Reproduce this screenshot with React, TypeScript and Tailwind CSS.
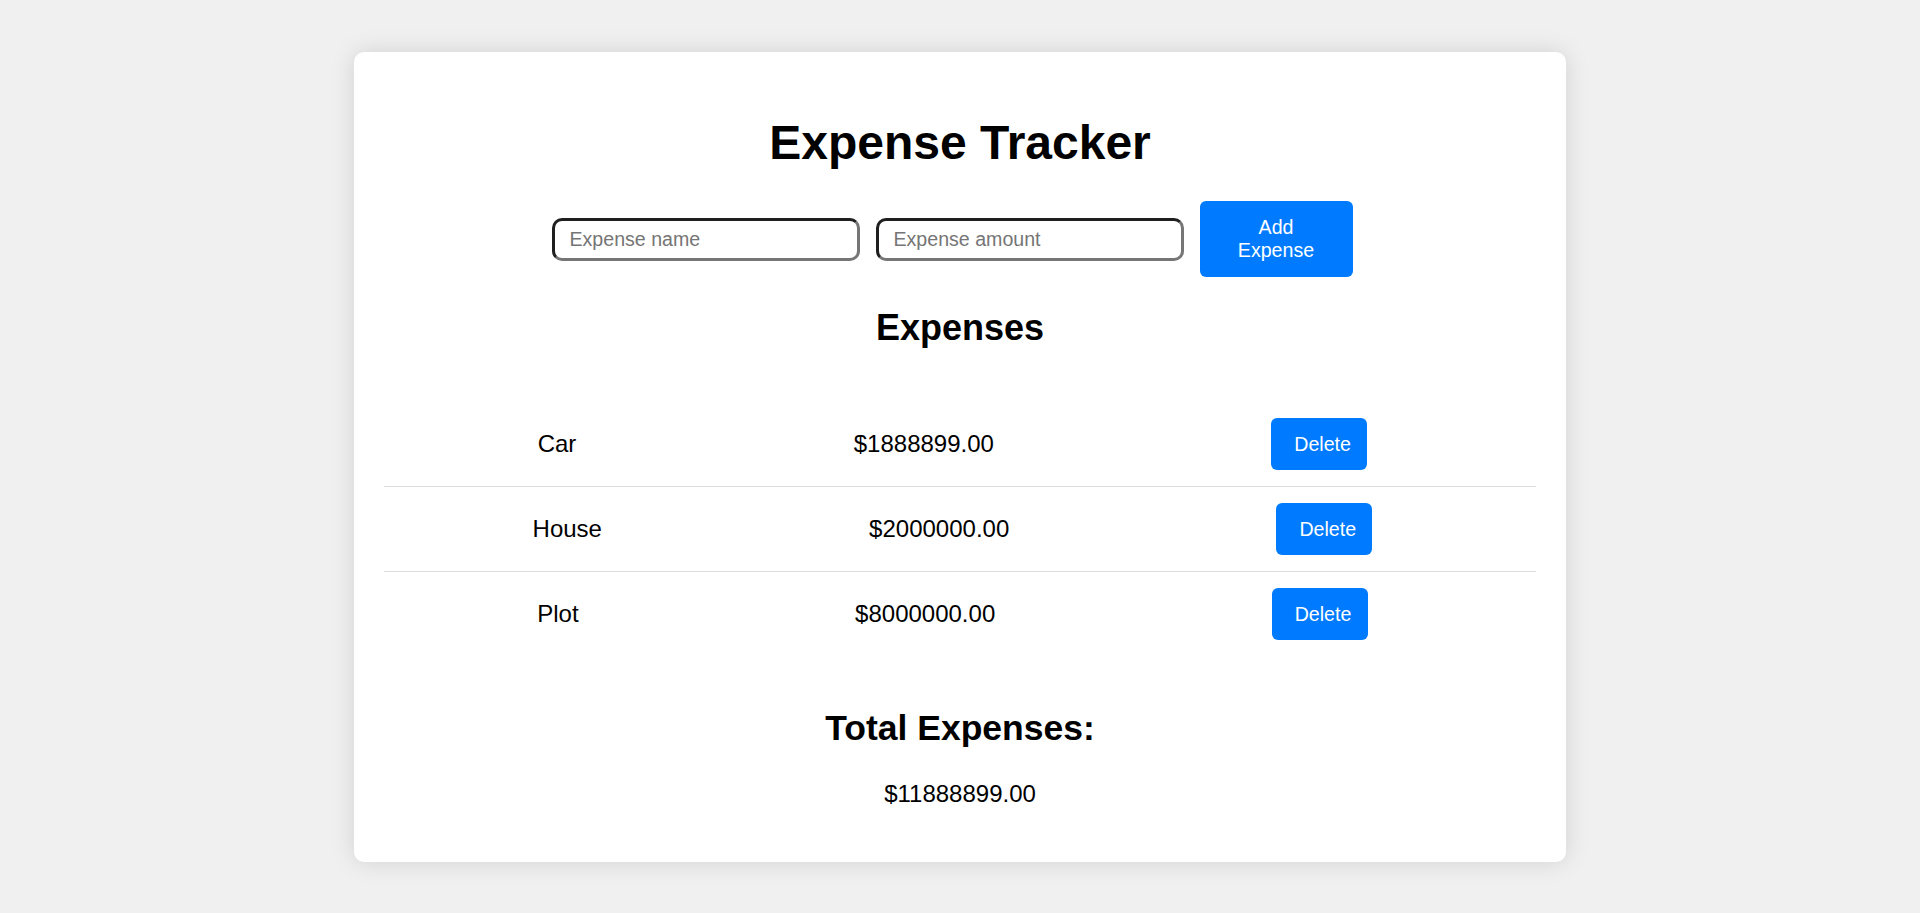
import { useState } from "react";

type Expense = { id: number; name: string; amount: number };

const initial: Expense[] = [
  { id: 1, name: "Car", amount: 1888899 },
  { id: 2, name: "House", amount: 2000000 },
  { id: 3, name: "Plot", amount: 8000000 },
];

export default function App() {
  const [expenses, setExpenses] = useState<Expense[]>(initial);
  const [name, setName] = useState("");
  const [amount, setAmount] = useState("");

  const addExpense = () => {
    const value = parseFloat(amount);
    if (!name.trim() || isNaN(value)) return;
    setExpenses([...expenses, { id: Date.now(), name: name.trim(), amount: value }]);
    setName("");
    setAmount("");
  };

  const total = expenses.reduce((sum, e) => sum + e.amount, 0);

  return (
    <div className="min-h-screen bg-[#f0f0f0] pt-[52px] pb-[50px] font-['Liberation_Sans',Arial,sans-serif] text-black">
      <div className="mx-auto w-[1212px] rounded-[10px] bg-white px-[30px] pt-[63px] pb-[54px] shadow-[0_0_24px_rgba(0,0,0,0.13)]">
        <h1 className="text-center text-[48px] leading-[56px] font-bold">Expense Tracker</h1>

        <div className="mt-[30px] flex items-center justify-center">
          <input
            value={name}
            onChange={(e) => setName(e.target.value)}
            placeholder="Expense name"
            className="mr-4 h-[43px] w-[308px] rounded-[10px] border-[3px] border-t-[#1f1f1f] border-l-[#1f1f1f] border-b-[#767676] border-r-[#767676] pl-[15px] text-[19.6px] outline-none placeholder:text-[#757575]"
          />
          <input
            value={amount}
            onChange={(e) => setAmount(e.target.value)}
            placeholder="Expense amount"
            type="number"
            className="mr-4 h-[43px] w-[308px] rounded-[10px] border-[3px] border-t-[#1f1f1f] border-l-[#1f1f1f] border-b-[#767676] border-r-[#767676] pl-[15px] text-[19.6px] outline-none placeholder:text-[#757575] [appearance:textfield]"
          />
          <button
            onClick={addExpense}
            className="mr-4 w-[153px] rounded-[6px] bg-[#007bff] px-[24px] py-[15px] text-[19.6px] leading-[23px] text-white"
          >
            Add Expense
          </button>
        </div>

        <h2 className="mt-[30px] text-center text-[36px] leading-[42px] font-bold">Expenses</h2>

        <ul className="mt-[53px]">
          {expenses.map((e) => (
            <li
              key={e.id}
              className="flex items-center justify-around border-b border-[#dddddd] py-4 pl-[15px] pr-[30px] text-[24px] leading-[28px] last:border-b-0"
            >
              <span>{e.name}</span>
              <span>${e.amount.toFixed(2)}</span>
              <button
                onClick={() => setExpenses(expenses.filter((x) => x.id !== e.id))}
                className="h-[52px] w-[96px] rounded-[6px] bg-[#007bff] pl-[23px] pr-[16px] text-left text-[19.6px] leading-[23px] text-white"
              >
                Delete
              </button>
            </li>
          ))}
        </ul>

        <h2 className="mt-[51px] text-center text-[35.5px] leading-[42px] font-bold">Total Expenses:</h2>
        <p className="mt-[31px] text-center text-[24px] leading-[28px]">${total.toFixed(2)}</p>
      </div>
    </div>
  );
}
